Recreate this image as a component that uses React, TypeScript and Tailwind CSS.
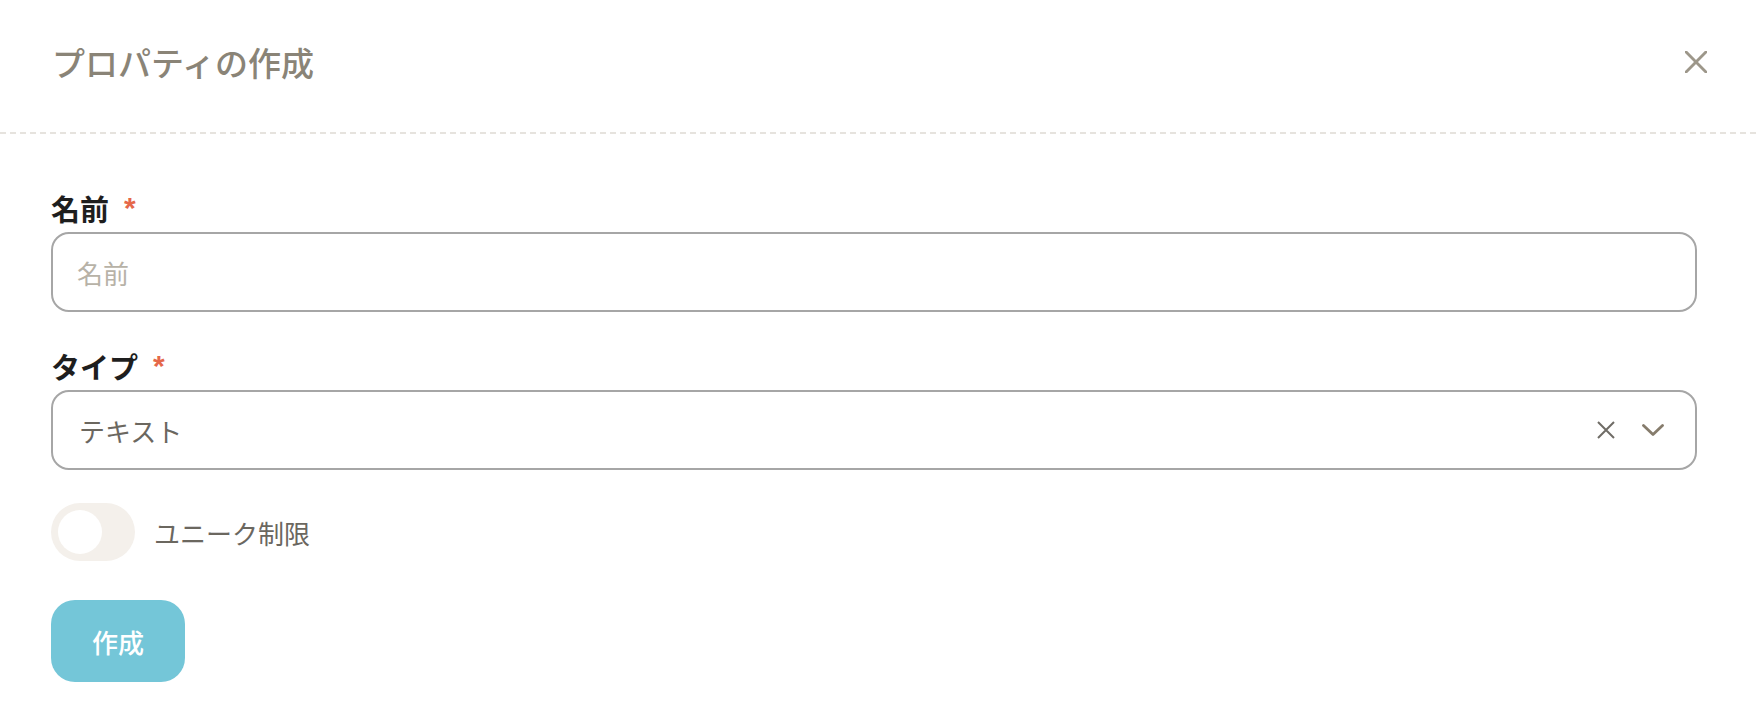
import { useState } from 'react';

function CloseIcon({ size, color, width }: { size: number; color: string; width: number }) {
    return (
        <svg width={size} height={size} viewBox="0 0 20 20" fill="none">
            <path d="M1 1L19 19M19 1L1 19" stroke={color} strokeWidth={width} strokeLinecap="round" />
        </svg>
    );
}

function Label({ text }: { text: string }) {
    return (
        <label className="flex items-start text-[29px] leading-[40px] font-bold text-[#1e1e1e]">
            {text}
            <span className="ml-[15px] font-['Liberation_Sans',sans-serif] font-bold text-[30px] text-[#e5684a]">*</span>
        </label>
    );
}

export default function App() {
    const [name, setName] = useState('');
    const [unique, setUnique] = useState(false);

    return (
        <div className="w-full h-[716px] bg-white font-['Noto_Sans_CJK_JP',sans-serif] overflow-hidden">
            <header className="flex items-center justify-between h-[132px] pb-[8px] pl-[52px] pr-[49px]">
                <h2 className="text-[33px] leading-none font-medium text-[#8a8477]">プロパティの作成</h2>
                <button className="flex items-center justify-center" title="閉じる">
                    <CloseIcon size={22} color="#9d978a" width={2.6} />
                </button>
            </header>
            <div className="h-[2px] w-full bg-[linear-gradient(to_right,#e6e3de_6px,transparent_6px)] bg-[length:10px_2px]" />

            <div className="pl-[51px] pr-[59px] pt-[54px] flex flex-col">
                <Label text="名前" />
                <input
                    type="text"
                    value={name}
                    onChange={(e) => setName(e.target.value)}
                    placeholder="名前"
                    className="mt-[4px] h-[80px] w-full rounded-[18px] border-2 border-[#a6a6a6] bg-white pl-[24px] pr-[24px] text-[26px] text-[#3a3833] placeholder-[#b7b2a7] outline-none"
                />

                <div className="mt-[34px]">
                    <Label text="タイプ" />
                </div>
                <div className="mt-[4px] h-[80px] w-full rounded-[18px] border-2 border-[#a6a6a6] bg-white pl-[26px] pr-[31px] flex items-center">
                    <span className="flex-1 text-[26px] text-[#6b675f]">テキスト</span>
                    <button className="flex items-center justify-center">
                        <svg width="18" height="18" viewBox="0 0 18 18" fill="none">
                            <path d="M1 1L17 17M17 1L1 17" stroke="#6f6c66" strokeWidth="2" />
                        </svg>
                    </button>
                    <button className="ml-[27px] flex items-center justify-center">
                        <svg width="22" height="12" viewBox="0 0 22 12" fill="none">
                            <path d="M1.5 1.5L11 10.5L20.5 1.5" stroke="#867c6c" strokeWidth="2.8" strokeLinecap="round" strokeLinejoin="round" />
                        </svg>
                    </button>
                </div>

                <div className="mt-[33px] flex items-center gap-[19px]">
                    <button
                        onClick={() => setUnique(!unique)}
                        className={`w-[84px] h-[58px] rounded-full p-[7px] flex items-center ${unique ? 'bg-[#74c6d8] justify-end' : 'bg-[#f4f0eb] justify-start'}`}
                    >
                        <span className="w-[44px] h-[44px] rounded-full bg-white" />
                    </button>
                    <span className="text-[26px] text-[#6b675f]">ユニーク制限</span>
                </div>

                <button className="mt-[39px] w-[134px] h-[82px] rounded-[24px] bg-[#74c6d8] text-white text-[26px] font-medium flex items-center justify-center">
                    作成
                </button>
            </div>
        </div>
    );
}
